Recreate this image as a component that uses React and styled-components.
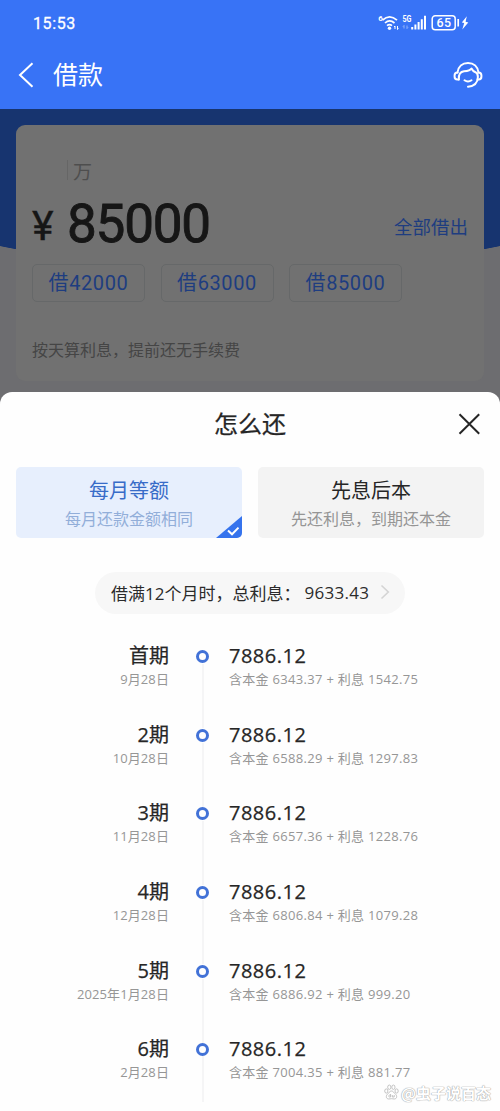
import React from "react";
import styled, { createGlobalStyle } from "styled-components";

const GlobalStyle = createGlobalStyle`
  *,
  *::before,
  *::after {
    box-sizing: border-box;
  }

  body {
    margin: 0;
    background: #fefefe;
    font-family: "Noto Sans CJK SC", sans-serif;
    white-space: nowrap;
  }
`;

const Page = styled.div`
  position: relative;
  width: 500px;
  height: 1111px;
  overflow: hidden;
  background: #fefefe;
`;

const Header = styled.header`
  height: 109px;
  background: #3873f6;
  color: #fff;
`;

const StatusBar = styled.div`
  display: flex;
  align-items: center;
  justify-content: space-between;
  height: 46px;
  padding: 0 30px 0 33px;
`;

const Clock = styled.span`
  padding-top: 1px;
  font: 400 16px/20px Roboto, sans-serif;
  letter-spacing: 0.6px;
  -webkit-text-stroke: 0.3px #fff;
`;

const NavBar = styled.div`
  display: flex;
  align-items: center;
  height: 58px;
  padding: 0 17px 0 18px;

  svg:last-child {
    margin-left: auto;
  }
`;

const NavTitle = styled.h1`
  margin: -4px 0 0 19px;
  font-size: 25px;
  font-weight: 400;
  line-height: 36px;
`;

const Backdrop = styled.section`
  height: 302px;
  padding: 16px 16px 0;
  background: radial-gradient(
      ellipse 480px 161px at 50% 0,
      #17346f 99.6%,
      transparent 100%
    )
    #6d6d70;
`;

const LoanCard = styled.div`
  height: 256px;
  padding: 31px 16px 0;
  border-radius: 9px;
  background: #717171;
`;

const Unit = styled.div`
  display: flex;
  align-items: center;
  height: 28px;
  margin-left: 35px;
  font-size: 19px;
  color: #4e4e4e;

  &::before {
    content: "";
    width: 1px;
    height: 20px;
    margin-right: 5px;
    background: #666;
  }
`;

const AmountRow = styled.div`
  display: flex;
  align-items: center;
  height: 72px;
  margin-top: 4px;
  color: #161616;
  font-family: Roboto, sans-serif;
`;

const Currency = styled.span`
  width: 35px;
  padding-top: 3px;
  font-size: 41px;
  line-height: 50px;
  -webkit-text-stroke: 0.4px #161616;
`;

const Amount = styled.span`
  font-size: 53px;
  line-height: 60px;
  letter-spacing: -1.2px;
  -webkit-text-stroke: 0.9px #161616;
`;

const BorrowAll = styled.span`
  margin: 3px 0 0 auto;
  font: 400 18.5px/28px "Noto Sans CJK SC", sans-serif;
  color: #1e3d80;
`;

const QuickAmounts = styled.div`
  display: flex;
  gap: 15.5px;
  margin-top: 4px;
`;

const QuickButton = styled.button`
  width: 113px;
  height: 38px;
  padding: 0;
  border: 1px solid #666869;
  border-radius: 5px;
  background: transparent;
  color: #1e3d80;
  font: 400 20px/34px Roboto, "Noto Sans CJK SC", sans-serif;
  letter-spacing: 0.6px;
`;

const Note = styled.p`
  margin: 35px 0 0;
  font-size: 16px;
  line-height: 24px;
  color: #454545;
`;

const Sheet = styled.section`
  position: relative;
  height: 720px;
  margin-top: -19px;
  border-radius: 12px 12px 0 0;
  background: #fefefe;
`;

const SheetHeader = styled.div`
  display: grid;
  grid-template-columns: 1fr auto 1fr;
  align-items: center;
  height: 64px;
  padding: 0 19px;

  svg {
    grid-column: 3;
    justify-self: end;
  }
`;

const SheetTitle = styled.h2`
  grid-column: 2;
  margin: -3px 0 0;
  font-size: 24px;
  font-weight: 400;
  line-height: 34px;
  color: #262626;
  -webkit-text-stroke: 0.25px #262626;
`;

const Options = styled.div`
  display: grid;
  grid-template-columns: 1fr 1fr;
  gap: 16px;
  margin-top: 11px;
  padding: 0 16px;
`;

const Option = styled.div`
  position: relative;
  height: 71px;
  padding-top: 8px;
  overflow: hidden;
  border-radius: 5px;
  text-align: center;
  background: ${(p) => (p.$active ? "#e7effd" : "#f3f3f3")};
  color: ${(p) => (p.$active ? "#386cc8" : "#262626")};

  small {
    display: block;
    font-size: 16px;
    line-height: 26px;
    color: ${(p) => (p.$active ? "#92aed9" : "#959595")};
  }

  svg {
    position: absolute;
    right: 0;
    bottom: 0;
  }
`;

const OptionTitle = styled.div`
  font-size: 20px;
  line-height: 30px;
`;

const Summary = styled.div`
  display: flex;
  align-items: center;
  width: 310px;
  height: 42px;
  margin: 34px auto 0;
  padding: 0 15px 2px 16px;
  border-radius: 21px;
  background: #f7f7f7;
  color: #2b2b2b;
  font-family: "Open Sans", "Noto Sans CJK SC", sans-serif;
  font-size: 17px;

  svg {
    margin-left: auto;
  }
`;

const Digits = styled.span`
  margin-left: 4px;
  letter-spacing: 0.3px;
`;

const Schedule = styled.ul`
  margin: 27px 0 0;
  padding: 0;
  list-style: none;
  font-family: "Open Sans", "Noto Sans CJK SC", sans-serif;
`;

const Row = styled.li`
  display: grid;
  grid-template-columns: 169px 67px 1fr;
  height: 78.7px;
`;

const Due = styled.div`
  text-align: right;
`;

const Track = styled.div`
  display: flex;
  flex-direction: column;
  align-items: center;
  padding-top: 9px;

  &::before {
    content: "";
    flex: none;
    width: 13px;
    height: 13px;
    border: 3.5px solid #4272d7;
    border-radius: 50%;
  }

  &::after {
    content: "";
    flex: none;
    width: 2px;
    height: ${(p) => (p.$last ? "46px" : "64px")};
    margin-top: ${(p) => (p.$last ? "0" : "1px")};
    background: #f5f5f6;
  }
`;

const Payment = styled.div`
  margin-left: -7px;
`;

const RowTitle = styled.div`
  height: 30px;
  font-size: 20px;
  font-weight: 400;
  line-height: 29px;
  letter-spacing: ${(p) => (p.$number ? "0.5px" : "0")};
  color: #262626;
  -webkit-text-stroke: 0.25px #262626;
`;

const RowNote = styled.div`
  height: 18px;
  font-size: 13px;
  line-height: 16px;
  letter-spacing: ${(p) => p.$spacing || "0.1px"};
  color: #969696;
`;

const Watermark = styled.div`
  position: absolute;
  right: 9px;
  bottom: 9px;
  display: flex;
  align-items: center;
  gap: 2px;
  height: 20px;
  color: #fff;
  font-size: 15px;
  font-weight: 700;
  text-shadow: 0 0 1px #aaa, 0 0 1px #aaa, 0 0 1px #bbb;
`;

const rows = [
  ["首期", "9月28日", "6343.37", "1542.75"],
  ["2期", "10月28日", "6588.29", "1297.83"],
  ["3期", "11月28日", "6657.36", "1228.76"],
  ["4期", "12月28日", "6806.84", "1079.28"],
  ["5期", "2025年1月28日", "6886.92", "999.20"],
  ["6期", "2月28日", "7004.35", "881.77"],
];

const StatusIcons = () => (
  <svg width="92" height="18" viewBox="0 0 92 18" fill="none" stroke="#fff">
    <g fill="#fff" stroke="none" fontFamily="Roboto, sans-serif" fontWeight="700">
      <text x="0.2" y="7" fontSize="8">6</text>
      <text x="24.5" y="7.5" fontSize="8.5" textLength="9" lengthAdjust="spacingAndGlyphs">5G</text>
      <text x="58.5" y="13.2" fontSize="12.5" fontWeight="500" textLength="14.5">65</text>
      <circle cx="11.5" cy="14.2" r="1.7" />
    </g>
    <path d="M4.5 6.2Q11.5-.5 19 6.2M7 9Q11.5 4.8 16.5 9M9 11.7q2.5-2 5 0" strokeWidth="1.7" />
    <path d="M17 12v3m-1-2 1-1M19.5 12v3.5m0 0 1-1" strokeWidth="1" />
    <path d="M26 11.5v3m-1-2 1-1M29 11.5v3m0 0 1-1" strokeWidth="1" opacity=".45" />
    <path d="M34.2 15.5V13M37.4 15.5v-5M40.6 15.5V8M43.8 15.5V5.2M47 15.5V1.8" strokeWidth="2" />
    <rect x="54.2" y="1.8" width="23" height="14" rx="3" strokeWidth="1.5" />
    <path d="M80.2 5v7.5" strokeWidth="1.7" />
    <path d="M88.8 2.2 83.8 8.5l2.4.6-1.9 6.4 6-7-2.7-.8z" fill="#fff" stroke="none" />
  </svg>
);

const BackIcon = () => (
  <svg width="16" height="26" viewBox="0 0 16 26" fill="none" stroke="#fff" strokeWidth="2">
    <path d="M14.5 1.2 2 13l12.5 11.8" />
  </svg>
);

const ServiceIcon = () => (
  <svg width="30" height="28" viewBox="0 0 30 28" fill="none" stroke="#fff" strokeWidth="2" strokeLinecap="round" strokeLinejoin="round">
    <path d="M4.5 11.5C5.2 5.5 9.3 2 15 2s9.8 3.5 10.5 9.5" />
    <path d="M5.8 18.5H4.3c-1.8 0-2.7-1-2.7-2.8v-1.4c0-1.8 1-2.8 2.9-2.8M25.5 11.5c1.9 0 2.9 1 2.9 2.8v1.4c0 1.8-.9 2.8-2.7 2.8h-1" />
    <path d="M5.8 18.5c-.3-5.2 1.3-7.8 5.2-8.2 3.8-.3 6.3-.8 7.5-2.8 1 2 2.2 3 4 3.7 1.7.8 2.4 2.3 2.4 4.8-.2 5.8-3.7 9.2-9.9 9.7" />
    <path d="M11.5 19.3c2.2 1.6 4.8 1.6 7 0" />
  </svg>
);

const CloseIcon = () => (
  <svg width="23" height="22" viewBox="0 0 23 22" fill="none" stroke="#262626" strokeWidth="2">
    <path d="m1.5 1.3 19.7 19.4M21.2 1.3 1.5 20.7" />
  </svg>
);

const SelectedCorner = () => (
  <svg width="26" height="22" viewBox="0 0 26 22" fill="none">
    <path d="M26 0v22H0z" fill="#3573ed" />
    <path d="m12 14.5 4 3.8 6.5-6.7" stroke="#fff" strokeWidth="2" />
  </svg>
);

const ChevronIcon = () => (
  <svg width="10" height="16" viewBox="0 0 10 16" fill="none" stroke="#d4d4d4" strokeWidth="1.6">
    <path d="m1.5 1.5 6.8 6.5-6.8 6.5" />
  </svg>
);

const PawIcon = () => (
  <svg width="15" height="16" viewBox="0 0 15 16" fill="#fff" stroke="#b5b5b5" strokeWidth=".8">
    <ellipse cx="2.3" cy="7" rx="1.6" ry="2.1" />
    <ellipse cx="5.3" cy="3.2" rx="1.6" ry="2.2" />
    <ellipse cx="9.4" cy="3.2" rx="1.6" ry="2.2" />
    <ellipse cx="12.6" cy="7" rx="1.6" ry="2.1" />
    <path d="M7.4 7C5.5 7 5 9 3.4 10.3 1.5 12 2.2 15 4.7 15c1 0 1.7-.3 2.8-.3s1.8.3 2.8.3c2.5 0 3.2-3 1.3-4.7C10 9 9.4 7 7.4 7z" />
    <path d="M6.6 10v3H5.4a1 1 0 0 1 0-1.9h1.2M8.3 11v2h1.9v-2" fill="none" />
  </svg>
);

const App = () => {
  return (
    <Page>
      <GlobalStyle />
      <Header>
        <StatusBar>
          <Clock>15:53</Clock>
          <StatusIcons />
        </StatusBar>
        <NavBar>
          <BackIcon />
          <NavTitle>借款</NavTitle>
          <ServiceIcon />
        </NavBar>
      </Header>

      <Backdrop>
        <LoanCard>
          <Unit>万</Unit>
          <AmountRow>
            <Currency>¥</Currency>
            <Amount>85000</Amount>
            <BorrowAll>全部借出</BorrowAll>
          </AmountRow>
          <QuickAmounts>
            <QuickButton>借42000</QuickButton>
            <QuickButton>借63000</QuickButton>
            <QuickButton>借85000</QuickButton>
          </QuickAmounts>
          <Note>按天算利息，提前还无手续费</Note>
        </LoanCard>
      </Backdrop>

      <Sheet>
        <SheetHeader>
          <SheetTitle>怎么还</SheetTitle>
          <CloseIcon />
        </SheetHeader>
        <Options>
          <Option $active>
            <OptionTitle>每月等额</OptionTitle>
            <small>每月还款金额相同</small>
            <SelectedCorner />
          </Option>
          <Option>
            <OptionTitle>先息后本</OptionTitle>
            <small>先还利息，到期还本金</small>
          </Option>
        </Options>
        <Summary>
          <span>借满12个月时，总利息：</span>
          <Digits>9633.43</Digits>
          <ChevronIcon />
        </Summary>
        <Schedule>
          {rows.map(([term, date, principal, interest], i) => (
            <Row key={term}>
              <Due>
                <RowTitle>{term}</RowTitle>
                <RowNote>{date}</RowNote>
              </Due>
              <Track $last={i === rows.length - 1} />
              <Payment>
                <RowTitle $number>7886.12</RowTitle>
                <RowNote $spacing="0.3px">
                  含本金 {principal} + 利息 {interest}
                </RowNote>
              </Payment>
            </Row>
          ))}
        </Schedule>
      </Sheet>

      <Watermark>
        <PawIcon />
        <span>@虫子说百态</span>
      </Watermark>
    </Page>
  );
};

export default App;
